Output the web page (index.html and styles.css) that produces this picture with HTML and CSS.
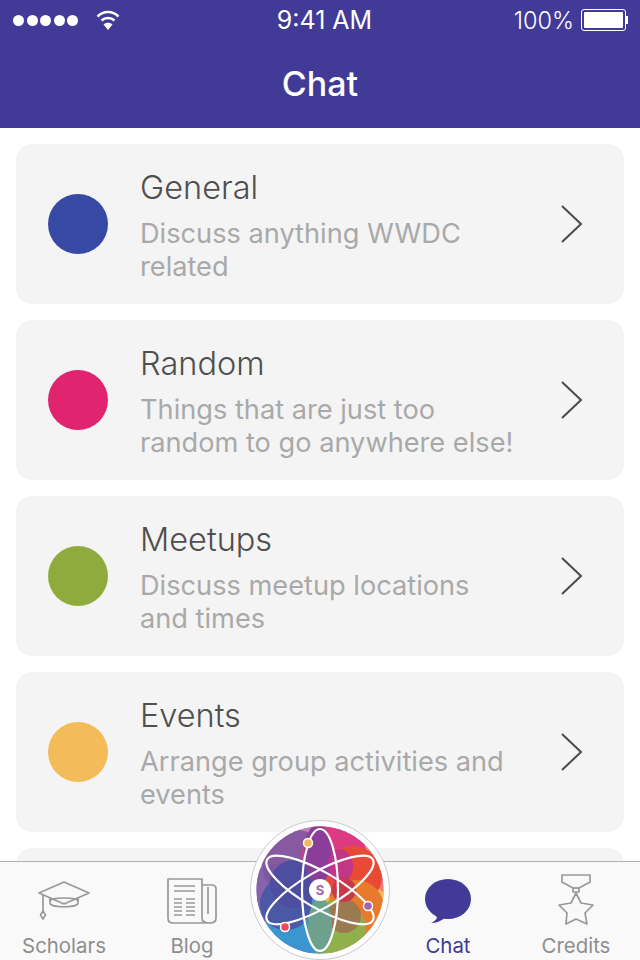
FILE: index.html
```html
<!DOCTYPE html>
<html lang="en">
<head>
    <meta charset="UTF-8">
    <title>Chat</title>
    <link rel="stylesheet" href="styles.css">
</head>
<body>
    <div class="app">
        <header class="topBar">
            <div class="statusBar">
                <div class="statusLeft">
                    <div class="signal"><i></i><i></i><i></i><i></i><i></i></div>
                    <svg class="wifi" width="24" height="22" viewBox="0 0 24 22">
                        <path d="M1.5 7.5C7.5 1.5 16.500 1.500 22.500 7.500" class="wifiArc"/>
                        <path d="M5.500 11.500C9 8 15 8 18.500 11.500" class="wifiArc"/>
                        <path d="M12 21L7.500 15.500C10 13 14 13 16.500 15.500Z" fill="#fff"/>
                    </svg>
                </div>
                <div class="clock">9:41 AM</div>
                <div class="statusRight">
                    <span>100%</span>
                    <div class="battery"><div class="batteryFill"></div></div>
                    <div class="batteryTip"></div>
                </div>
            </div>
            <h1 class="navTitle">Chat</h1>
        </header>

        <main class="channelList">
            <div class="channel">
                <div class="dot dotBlue"></div>
                <div class="channelText">
                    <div class="channelName">General</div>
                    <div class="channelDesc">Discuss anything WWDC related</div>
                </div>
                <svg class="chevron" width="24" height="40" viewBox="0 0 24 40"><path d="M2 2L21 20L2 38"/></svg>
            </div>
            <div class="channel">
                <div class="dot dotPink"></div>
                <div class="channelText">
                    <div class="channelName">Random</div>
                    <div class="channelDesc">Things that are just too random to go anywhere else!</div>
                </div>
                <svg class="chevron" width="24" height="40" viewBox="0 0 24 40"><path d="M2 2L21 20L2 38"/></svg>
            </div>
            <div class="channel">
                <div class="dot dotGreen"></div>
                <div class="channelText">
                    <div class="channelName">Meetups</div>
                    <div class="channelDesc">Discuss meetup locations and times</div>
                </div>
                <svg class="chevron" width="24" height="40" viewBox="0 0 24 40"><path d="M2 2L21 20L2 38"/></svg>
            </div>
            <div class="channel">
                <div class="dot dotYellow"></div>
                <div class="channelText">
                    <div class="channelName">Events</div>
                    <div class="channelDesc">Arrange group activities and events</div>
                </div>
                <svg class="chevron" width="24" height="40" viewBox="0 0 24 40"><path d="M2 2L21 20L2 38"/></svg>
            </div>
            <div class="channel"></div>
        </main>

        <!-- Tab bar sits over the list -->
        <nav class="tabBar">
            <div class="tab">
                <svg class="tabIcon" width="60" height="56" viewBox="0 0 60 56">
                    <path d="M5 21L30 10L55 21L30 32Z"/>
                    <path d="M16 25V31C16 36 44 36 44 31V25"/>
                    <path d="M16 29C16 25 44 25 44 29"/>
                    <path d="M9 23V39"/>
                    <path d="M9 39L11.500 43L9 47L6.500 43Z"/>
                </svg>
                <span>Scholars</span>
            </div>
            <div class="tab">
                <svg class="tabIcon" width="60" height="56" viewBox="0 0 60 56">
                    <path d="M6 7H40V46C40 49 42 51 48 51H11C8 51 6 49 6 46Z"/>
                    <path d="M40 13H50C53 13 54 15 54 17V46C54 49 52 51 48 51"/>
                    <path d="M46 15V42"/>
                    <path d="M12 14H33M12 19H33"/>
                    <path d="M12 27H20M12 31H20M12 35H20M12 39H20M12 43H20"/>
                    <path d="M24 27H33M24 31H33M24 35H33M24 39H33M24 43H33"/>
                </svg>
                <span>Blog</span>
            </div>
            <div class="tab"></div>
            <div class="tab tabActive">
                <svg width="60" height="56" viewBox="0 0 60 56">
                    <ellipse cx="30" cy="27" rx="23" ry="20" fill="#413a96"/>
                    <path d="M17 40L19 46C17 49 15 50 13 51C18 51 23 49 27 46Z" fill="#413a96"/>
                </svg>
                <span>Chat</span>
            </div>
            <div class="tab">
                <svg class="tabIcon" width="60" height="56" viewBox="0 0 60 56">
                    <path d="M16 3H44V10L33 16H27L16 10Z"/>
                    <path d="M27 16H33V20H27Z"/>
                    <path d="M30 21L35 31L47 33L39 41L41 52L30 47L20 52L21 41L13 33L25 31Z"/>
                </svg>
                <span>Credits</span>
            </div>
        </nav>

        <div class="logoBadge">
            <svg width="140" height="140" viewBox="-70 -70 140 140">
                <defs>
                    <clipPath id="logoClip"><circle r="63.500"/></clipPath>
                </defs>
                <g clip-path="url(#logoClip)">
                    <circle r="64" fill="#a878b4"/>
                    <circle cx="-30" cy="-30" r="44" fill="#c084b4" opacity=".8"/>
                    <circle cx="28" cy="-34" r="44" fill="#ec6a96" opacity=".7"/>
                    <circle cx="40" cy="-8" r="42" fill="#f5806a" opacity=".8"/>
                    <circle cx="34" cy="32" r="42" fill="#f6b65a"/>
                    <circle cx="-30" cy="34" r="42" fill="#3f97d2"/>
                    <circle cx="-44" cy="4" r="30" fill="#8564aa"/>
                    <circle cx="-24" cy="-26" r="34" fill="#80549f" opacity=".9"/>
                    <circle cx="14" cy="-36" r="32" fill="#de3a82"/>
                    <circle cx="32" cy="-14" r="30" fill="#e94a35"/>
                    <circle cx="36" cy="18" r="28" fill="#e87a2e"/>
                    <circle cx="16" cy="40" r="30" fill="#8fb04a"/>
                    <circle cx="-22" cy="36" r="30" fill="#3b96d0"/>
                    <circle cx="-34" cy="14" r="26" fill="#4a58a6"/>
                    <circle cx="-26" cy="-6" r="24" fill="#4d4e9f"/>
                    <ellipse cx="-2" cy="-36" rx="14" ry="30" fill="#8a3e9a"/>
                    <ellipse cx="20" cy="-24" rx="13" ry="17" fill="#b8329a" opacity=".8"/>
                    <circle cx="24" cy="26" r="17" fill="#9c7a50"/>
                    <ellipse cx="0" cy="36" rx="12" ry="28" fill="#6ea08e"/>
                    <circle cx="24" cy="0" r="12" fill="#c83a4a"/>
                </g>
                <g class="orbits">
                    <ellipse rx="18" ry="61"/>
                    <ellipse rx="18" ry="61" transform="rotate(60)"/>
                    <ellipse rx="18" ry="61" transform="rotate(-60)"/>
                </g>
                <circle cx="-12" cy="-47" r="4.500" fill="#f4b95a" stroke="#fff" stroke-width="1.500"/>
                <circle cx="48" cy="16" r="4.500" fill="#a566ae" stroke="#fff" stroke-width="1.500"/>
                <circle cx="-35" cy="37" r="4.500" fill="#ea4a5a" stroke="#fff" stroke-width="1.500"/>
                <circle r="11" fill="#fff"/>
                <text class="logoLetter" y="4.500" text-anchor="middle">S</text>
            </svg>
        </div>
    </div>
</body>
</html>
```

FILE: styles.css
```css
* {
    box-sizing: border-box;
}

body {
    margin: 0;
    background-color: #fff;
    font-family: Inter, "Liberation Sans", sans-serif;
}

.app {
    position: relative;
    display: flex;
    flex-direction: column;
    width: 640px;
    height: 960px;
    overflow: hidden;
}

/* Header */
.topBar {
    flex: none;
    height: 128px;
    background-color: #413a96;
    color: #fff;
}

.statusBar {
    display: grid;
    grid-template-columns: 1fr auto 1fr;
    align-items: center;
    height: 40px;
    padding: 0 12px 0 13px;
    font-size: 23.500px;
}

.statusLeft {
    display: flex;
    align-items: center;
    gap: 18px;
}

.clock {
    margin-left: 8px;
    font-size: 25px;
}

.signal {
    display: flex;
    gap: 2.500px;
}

.signal i {
    width: 11px;
    height: 11px;
    border-radius: 50%;
    background-color: #fff;
}

.wifiArc {
    fill: none;
    stroke: #fff;
    stroke-width: 2.500;
}

.statusRight {
    display: flex;
    align-items: center;
    justify-content: flex-end;
}

.statusRight span {
    margin-right: 7px;
    font-weight: 300;
}

.battery {
    width: 45px;
    height: 22px;
    padding: 2px;
    border: 1px solid #fff;
    border-radius: 3px;
}

.batteryFill {
    height: 100%;
    border-radius: 1px;
    background-color: #fff;
}

.batteryTip {
    width: 2px;
    height: 8px;
    background-color: #fff;
}

.navTitle {
    margin: 0;
    height: 88px;
    padding-top: 24px;
    font-size: 34px;
    font-weight: 500;
    line-height: 40px;
    text-align: center;
}

/* Channels */
.channelList {
    display: flex;
    flex-direction: column;
    gap: 16px;
    padding: 16px;
}

.channel {
    display: flex;
    flex: none;
    align-items: center;
    height: 160px;
    padding: 0 40px 0 32px;
    border-radius: 16px;
    background-color: #f4f4f4;
}

.dot {
    flex: none;
    width: 60px;
    height: 60px;
    border-radius: 50%;
}

.dotBlue { background-color: #3649a3; }
.dotPink { background-color: #e0246f; }
.dotGreen { background-color: #8fab3e; }
.dotYellow { background-color: #f4bb5a; }

.channelText {
    flex: 1;
    margin-left: 32px;
    padding: 3px 42px 0 0;
}

.channelName {
    color: #4f4f4f;
    font-size: 32.500px;
    font-weight: 300;
    line-height: 38px;
}

.channelDesc {
    margin-top: 10px;
    color: #a9a9a9;
    font-size: 27.200px;
    line-height: 33px;
}

.chevron {
    flex: none;
}

.chevron path {
    fill: none;
    stroke: #4a4a4a;
    stroke-width: 2;
}

/* Tab bar */
.tabBar {
    position: absolute;
    left: 0;
    right: 0;
    bottom: 0;
    display: grid;
    grid-template-columns: repeat(5, 1fr);
    height: 99px;
    padding-top: 10px;
    border-top: 1px solid #b0b0b0;
    background-color: #f9f9f9;
}

.tab {
    display: flex;
    flex-direction: column;
    align-items: center;
    color: #8e8e8e;
    font-size: 20.400px;
    line-height: 24px;
}

.tab span {
    margin-top: 6px;
}

.tabActive {
    color: #413a96;
}

.tabIcon path {
    fill: none;
    stroke: #999;
    stroke-width: 1.700;
    stroke-linejoin: round;
}

/* Round logo over the tab bar */
.logoBadge {
    position: absolute;
    left: 250px;
    bottom: 0;
    width: 140px;
    height: 140px;
    border: 1px solid #c9c9d2;
    border-radius: 50%;
    background-color: #fff;
}

.logoBadge svg {
    display: block;
    margin: -1px;
}

.orbits ellipse {
    fill: none;
    stroke: #fff;
    stroke-width: 2.200;
}

.logoLetter {
    fill: #a566ae;
    font-size: 13px;
    font-weight: 700;
}
```
